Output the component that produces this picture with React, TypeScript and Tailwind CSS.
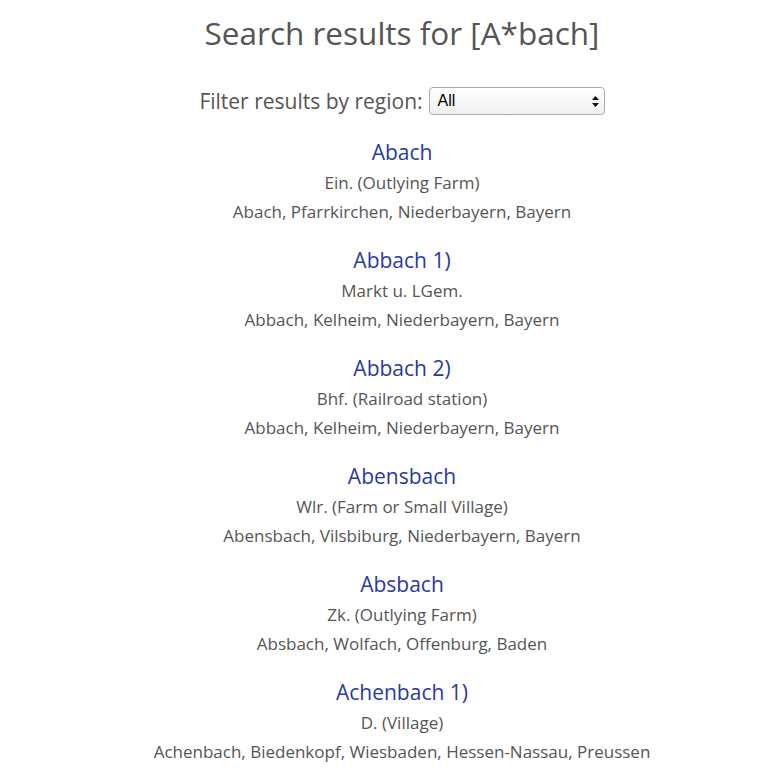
const results = [
  { name: "Abach", type: "Ein. (Outlying Farm)", place: "Abach, Pfarrkirchen, Niederbayern, Bayern" },
  { name: "Abbach 1)", type: "Markt u. LGem.", place: "Abbach, Kelheim, Niederbayern, Bayern" },
  { name: "Abbach 2)", type: "Bhf. (Railroad station)", place: "Abbach, Kelheim, Niederbayern, Bayern" },
  { name: "Abensbach", type: "Wlr. (Farm or Small Village)", place: "Abensbach, Vilsbiburg, Niederbayern, Bayern" },
  { name: "Absbach", type: "Zk. (Outlying Farm)", place: "Absbach, Wolfach, Offenburg, Baden" },
  { name: "Achenbach 1)", type: "D. (Village)", place: "Achenbach, Biedenkopf, Wiesbaden, Hessen-Nassau, Preussen" },
];

const App = () => {
  return (
    <div className="min-h-screen bg-white text-[#555] font-['Open_Sans',sans-serif] flex flex-col items-center pl-[36px]">
      <h1 className="text-[31.5px] leading-[40px] mt-[13px] font-normal">Search results for [A*bach]</h1>

      <div className="flex items-center gap-[6px] mt-[34px] text-[21px] leading-[28px]">
        <span>Filter results by region:</span>
        <div className="relative w-[176px] h-[28px] border border-[#aaa] rounded-[4px] bg-gradient-to-b from-white to-[#f0f0f0] flex items-center px-[8px] text-[16px] text-black font-['Liberation_Sans',sans-serif]">
          All
          <svg className="absolute right-[5px] top-[8px]" width="7" height="11" viewBox="0 0 7 11">
            <path d="M3.5 0 L7 4 H0 Z" fill="#111" />
            <path d="M0 7 H7 L3.5 11 Z" fill="#111" />
          </svg>
        </div>
      </div>

      <div className="mt-[22px] flex flex-col items-center">
        {results.map((r, i) => (
          <div key={i} className="flex flex-col items-center mb-[19px]">
            <a className="text-[21px] leading-[31px] text-[#2a3aa0]">{r.name}</a>
            <div className="text-[17px] leading-[29px]">{r.type}</div>
            <div className="text-[17px] leading-[29px]">{r.place}</div>
          </div>
        ))}
      </div>
    </div>
  );
};

export default App;
